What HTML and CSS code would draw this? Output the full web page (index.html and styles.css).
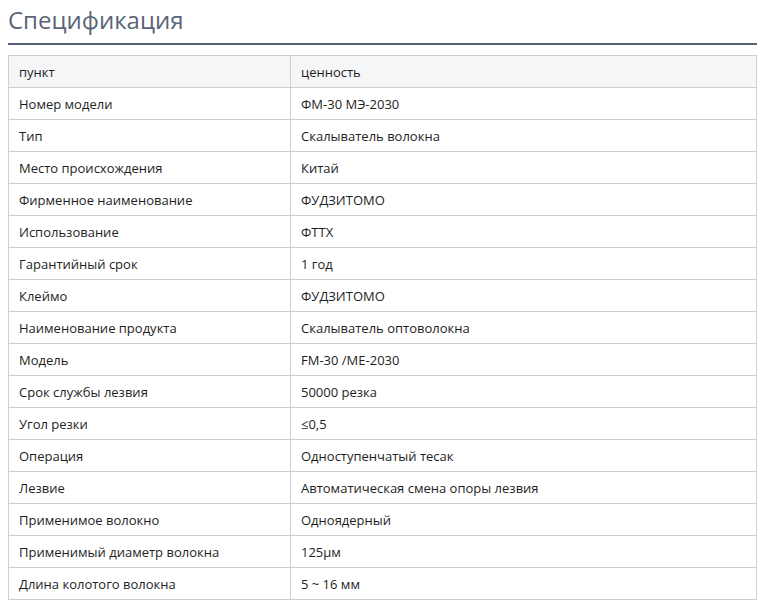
FILE: index.html
```html
<!DOCTYPE html>
<html lang="ru">
<head>
<meta charset="utf-8">
<link rel="stylesheet" href="styles.css">
</head>
<body>
<div class="spec">
  <h2 class="spec-title">Спецификация</h2>
  <table class="spec-table">
    <thead>
      <tr><th>пункт</th><th>ценность</th></tr>
    </thead>
    <tbody>
      <tr><td>Номер модели</td><td>ФМ-30 МЭ-2030</td></tr>
      <tr><td>Тип</td><td>Скалыватель волокна</td></tr>
      <tr><td>Место происхождения</td><td>Китай</td></tr>
      <tr><td>Фирменное наименование</td><td>ФУДЗИТОМО</td></tr>
      <tr><td>Использование</td><td>ФТТХ</td></tr>
      <tr><td>Гарантийный срок</td><td>1 год</td></tr>
      <tr><td>Клеймо</td><td>ФУДЗИТОМО</td></tr>
      <tr><td>Наименование продукта</td><td>Скалыватель оптоволокна</td></tr>
      <tr><td>Модель</td><td>FM-30 /ME-2030</td></tr>
      <tr><td>Срок службы лезвия</td><td>50000 резка</td></tr>
      <tr><td>Угол резки</td><td>≤0,5</td></tr>
      <tr><td>Операция</td><td>Одноступенчатый тесак</td></tr>
      <tr><td>Лезвие</td><td>Автоматическая смена опоры лезвия</td></tr>
      <tr><td>Применимое волокно</td><td>Одноядерный</td></tr>
      <tr><td>Применимый диаметр волокна</td><td>125μм</td></tr>
      <tr><td>Длина колотого волокна</td><td>5 ~ 16 мм</td></tr>
    </tbody>
  </table>
</div>
</body>
</html>
```
FILE: styles.css
```css
html, body {
  margin: 0;
  padding: 0;
  background: #ffffff;
}
body {
  padding: 0 7px 0 8px;
  font-family: "Open Sans", "Noto Sans", sans-serif;
  color: #222;
}
.spec-title {
  margin: 0;
  padding: 4px 0 0 0;
  height: 45px;
  box-sizing: border-box;
  font-size: 24px;
  font-weight: 400;
  line-height: 32px;
  color: #5a6578;
  border-bottom: 2px solid #566275;
}
.spec-table {
  margin-top: 10px;
  width: 100%;
  border-collapse: collapse;
  font-size: 13px;
}
.spec-table th,
.spec-table td {
  border: 1px solid #cfcfcf;
  height: 31px;
  padding: 0 10px;
  text-align: left;
  font-weight: 400;
  vertical-align: middle;
  color: #1e1e1e;
}
.spec-table th:first-child,
.spec-table td:first-child {
  width: 261px;
}
.spec-table thead th {
  background: #f5f6f8;
}
```
